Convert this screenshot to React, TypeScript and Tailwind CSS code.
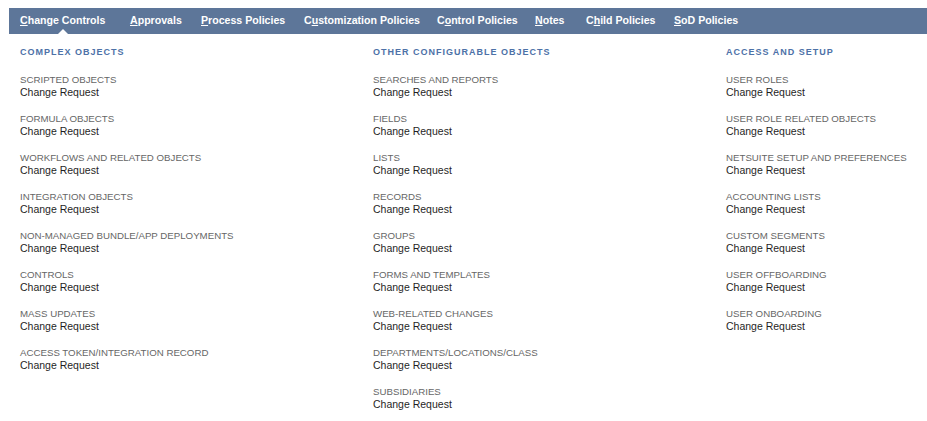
import React from "react";

const tabs: { pre: string; u: string; post: string; w: string }[] = [
  { pre: "", u: "C", post: "hange Controls", w: "w-[110px]" },
  { pre: "", u: "A", post: "pprovals", w: "w-[71px]" },
  { pre: "", u: "P", post: "rocess Policies", w: "w-[103px]" },
  { pre: "C", u: "u", post: "stomization Policies", w: "w-[133px]" },
  { pre: "C", u: "o", post: "ntrol Policies", w: "w-[98px]" },
  { pre: "", u: "N", post: "otes", w: "w-[51px]" },
  { pre: "C", u: "h", post: "ild Policies", w: "w-[88px]" },
  { pre: "", u: "S", post: "oD Policies", w: "w-[80px]" },
];

const columns: { title: string; items: string[] }[] = [
  {
    title: "COMPLEX OBJECTS",
    items: [
      "SCRIPTED OBJECTS",
      "FORMULA OBJECTS",
      "WORKFLOWS AND RELATED OBJECTS",
      "INTEGRATION OBJECTS",
      "NON-MANAGED BUNDLE/APP DEPLOYMENTS",
      "CONTROLS",
      "MASS UPDATES",
      "ACCESS TOKEN/INTEGRATION RECORD",
    ],
  },
  {
    title: "OTHER CONFIGURABLE OBJECTS",
    items: [
      "SEARCHES AND REPORTS",
      "FIELDS",
      "LISTS",
      "RECORDS",
      "GROUPS",
      "FORMS AND TEMPLATES",
      "WEB-RELATED CHANGES",
      "DEPARTMENTS/LOCATIONS/CLASS",
      "SUBSIDIARIES",
    ],
  },
  {
    title: "ACCESS AND SETUP",
    items: [
      "USER ROLES",
      "USER ROLE RELATED OBJECTS",
      "NETSUITE SETUP AND PREFERENCES",
      "ACCOUNTING LISTS",
      "CUSTOM SEGMENTS",
      "USER OFFBOARDING",
      "USER ONBOARDING",
    ],
  },
];

export default function App() {
  return (
    <div
      className="w-[927px] h-[421px] bg-white pt-[8px] pl-[9px]"
      style={{ fontFamily: '"Liberation Sans", Arial, sans-serif' }}
    >
      <nav className="h-[26px] bg-[#5d7699] flex items-stretch pl-[11px] text-white font-bold text-[10.6px]">
        {tabs.map((t, i) => (
          <div key={i} className={`${t.w} shrink-0 flex items-center whitespace-nowrap`}>
            <span className="relative h-full flex items-center">
              <span>
                {t.pre}
                <u className="underline underline-offset-[1px]">{t.u}</u>
                {t.post}
              </span>
              {i === 0 && (
                <span className="absolute bottom-0 left-1/2 -translate-x-1/2 w-0 h-0 border-l-[5px] border-r-[5px] border-b-[5px] border-l-transparent border-r-transparent border-b-white" />
              )}
            </span>
          </div>
        ))}
      </nav>
      <div className="grid grid-cols-[353px_353px_1fr] pl-[11px] pt-[12px]">
        {columns.map((c) => (
          <div key={c.title} className="flex flex-col">
            <div className="h-[12px] leading-[12px] text-[9px] font-bold tracking-[1px] text-[#4d71a7]">
              {c.title}
            </div>
            <div className="flex flex-col gap-[13px] pt-[14.5px]">
              {c.items.map((it) => (
                <div key={it} className="flex flex-col">
                  <div className="h-[13px] leading-[13px] text-[9.7px] text-[#666666] whitespace-nowrap">
                    {it}
                  </div>
                  <div className="h-[13px] leading-[13px] text-[10.5px] text-[#1f1f1f] whitespace-nowrap">
                    Change Request
                  </div>
                </div>
              ))}
            </div>
          </div>
        ))}
      </div>
    </div>
  );
}
